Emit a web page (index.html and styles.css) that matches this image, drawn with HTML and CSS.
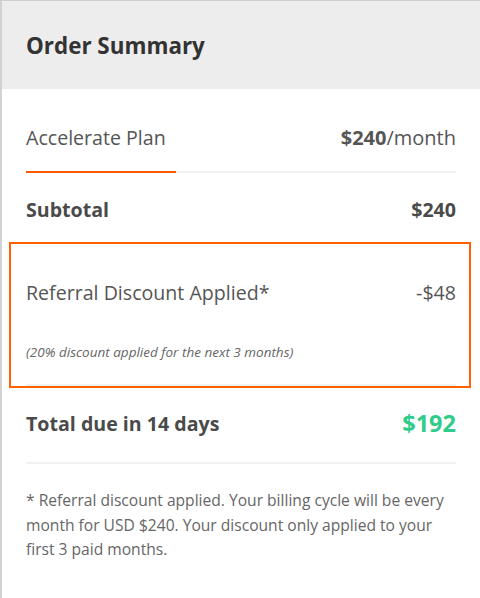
FILE: index.html
```html
<!DOCTYPE html>
<html lang="en">
<head>
<meta charset="utf-8">
<title>Order Summary</title>
<link rel="stylesheet" href="styles.css">
</head>
<body>
<div class="card">
  <div class="header">Order Summary</div>
  <div class="content">
    <div class="row plan">
      <span class="label">Accelerate Plan</span>
      <span class="value"><b>$240</b>/month</span>
    </div>
    <div class="rule"><div class="rule-accent"></div></div>
    <div class="row subtotal">
      <span class="label strong">Subtotal</span>
      <span class="value strong">$240</span>
    </div>
    <div class="discount">
      <div class="row disc-row">
        <span class="label">Referral Discount Applied*</span>
        <span class="value">-$48</span>
      </div>
      <div class="note">(20% discount applied for the next 3 months)</div>
      <div class="rule"></div>
    </div>
    <div class="row total">
      <span class="label strong">Total due in 14 days</span>
      <span class="value green">$192</span>
    </div>
    <div class="rule"></div>
    <p class="footnote">* Referral discount applied. Your billing cycle will be every month for USD $240. Your discount only applied to your first 3 paid months.</p>
  </div>
</div>
</body>
</html>
```

FILE: styles.css
```css
html, body {
  margin: 0;
  padding: 0;
  background: #fff;
}
body {
  font-family: "Open Sans", "Liberation Sans", sans-serif;
  color: #555;
}
.card {
  height: 597px;
  border-top: 1px solid #cfcfcf;
  border-left: 2px solid #d2d2d2;
}
.header {
  height: 88px;
  background: #ededed;
  padding-left: 24px;
  display: flex;
  align-items: center;
  font-size: 22.4px;
  font-weight: 700;
  color: #333;
}
.content {
  padding: 0 24px 0 24px;
}
.row {
  display: flex;
  justify-content: space-between;
  align-items: center;
  height: 30px;
  font-size: 19.6px;
}
.plan {
  padding-top: 33px;
  padding-bottom: 19px;
}
.plan .value {
  font-size: 20px;
}
.plan .value b {
  font-weight: 700;
  color: #555;
}
.rule {
  height: 2px;
  background: #f1f1f1;
  position: relative;
}
.rule-accent {
  position: absolute;
  left: 0;
  top: 0;
  width: 150px;
  height: 2px;
  background: #ff5a00;
}
.subtotal {
  padding-top: 21px;
  padding-bottom: 18px;
}
.strong {
  font-weight: 700;
  color: #4a4a4a;
}
.discount {
  margin: 0 -15px 0 -17px;
  padding: 0 13px 0 15px;
  border: 2px solid #ff6000;
}
.disc-row {
  padding-top: 33px;
}
.note {
  margin-top: 36px;
  height: 18px;
  line-height: 18px;
  font-size: 13.5px;
  font-style: italic;
  color: #666;
  margin-bottom: 23px;
}
.total {
  padding-top: 20px;
  padding-bottom: 24px;
}
.green {
  color: #2fcc8b;
  font-weight: 700;
  font-size: 23.5px;
}
.footnote {
  margin: 24px 0 0 0;
  font-size: 15.6px;
  line-height: 24.5px;
  color: #666;
}
```
